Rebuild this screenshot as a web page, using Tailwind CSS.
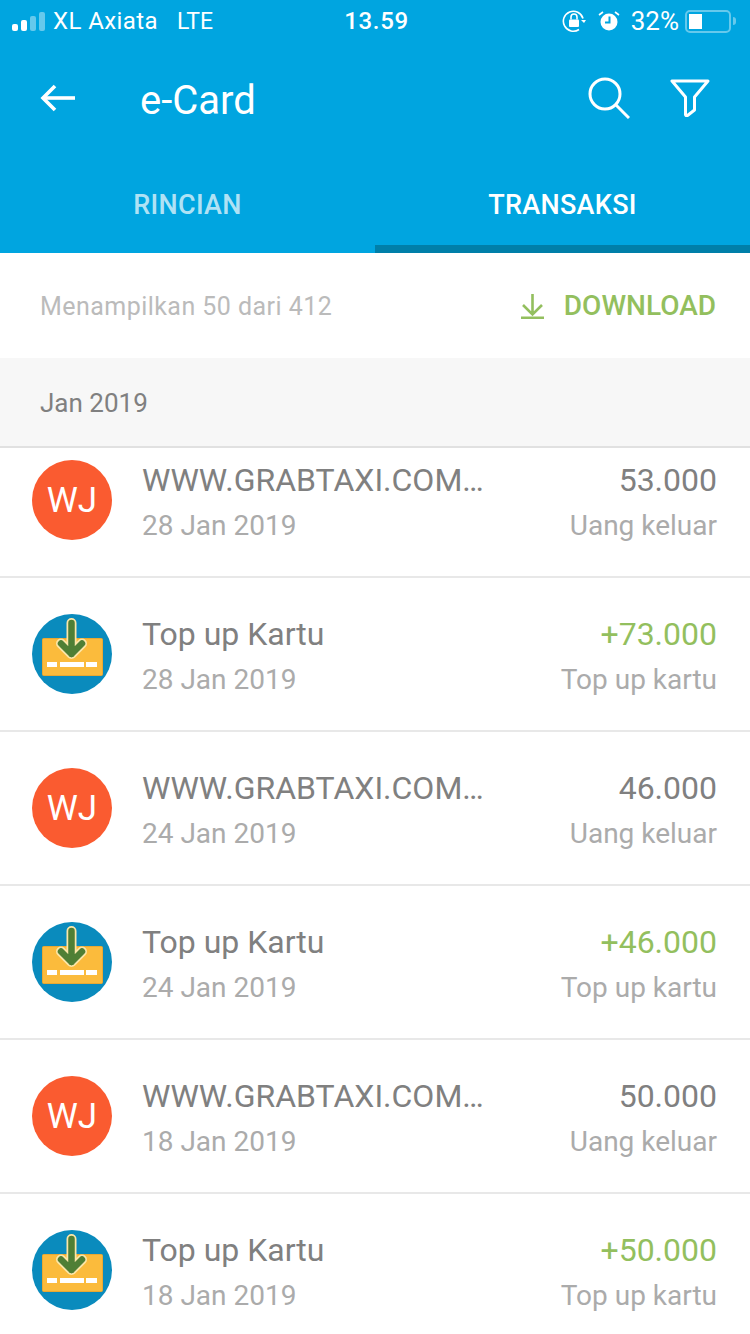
<!DOCTYPE html>
<html lang="id">
<head>
    <meta charset="UTF-8">
    <meta name="viewport" content="width=device-width, initial-scale=1.0">
    <title>e-Card</title>
    <script src="https://cdn.jsdelivr.net/npm/@tailwindcss/browser@4"></script>
</head>
<body class="font-['Roboto',sans-serif] bg-white antialiased">
<div class="w-[750px] h-[1334px] overflow-hidden flex flex-col">
    <!-- header -->
    <header class="bg-[#00a5e0] text-white h-[253px] shrink-0 flex flex-col">
        <div class="h-[42px] grid grid-cols-[1fr_auto_1fr] items-center pl-3 pr-[14px] text-[24px] leading-none">
            <div class="flex items-center">
                <div class="flex items-end gap-[3px]">
                    <span class="w-[6px] h-[7px] rounded-[2px] bg-white"></span>
                    <span class="w-[6px] h-[11px] rounded-[2px] bg-white"></span>
                    <span class="w-[6px] h-[15px] rounded-[2px] bg-white/40"></span>
                    <span class="w-[6px] h-[19px] rounded-[2px] bg-white/40"></span>
                </div>
                <span class="ml-2 whitespace-nowrap tracking-[0.4px]">XL Axiata</span>
                <span class="ml-[19px] text-[23px]">LTE</span>
            </div>
            <span class="font-medium tracking-[0.7px] ml-[5px]">13.59</span>
            <div class="flex items-center justify-end">
                <svg width="24" height="24" viewBox="0 0 24 24" fill="none" stroke="white" stroke-width="1.6">
                    <path d="M21 9.500A10 10 0 1 0 17 20.500"/>
                    <path d="M19 11l3 3 2-3z" fill="white" stroke="none"/>
                    <rect x="7" y="10.500" width="10" height="7.500" rx="1" fill="white" stroke="none"/>
                    <path d="M9 10.500V8a3 3 0 0 1 6 0v2.500"/>
                </svg>
                <svg class="ml-[12px]" width="22" height="22" viewBox="0 0 22 22" fill="white">
                    <circle cx="11" cy="12" r="8.500"/>
                    <path d="M1 5l4-3M21 5l-4-3" stroke="white" stroke-width="1.6"/>
                    <path d="M11.500 6.500v6H7" fill="none" stroke="#00a5e0" stroke-width="2"/>
                </svg>
                <span class="ml-[11px] text-[26px] whitespace-nowrap">32%</span>
                <div class="ml-[6px] w-[46px] h-[23px] rounded-[5px] border-2 border-white/40 p-[2px]">
                    <div class="w-[13px] h-[15px] bg-white"></div>
                </div>
                <div class="w-[3px] h-[8px] bg-white/40 rounded-r-full ml-[2px]"></div>
            </div>
        </div>
        <div class="h-[116px] flex items-center pl-10 pr-10">
            <svg class="mt-[-4px]" width="36" height="30" viewBox="0 0 36 30" fill="none" stroke="white" stroke-width="3.600">
                <path d="M35 15H3"/>
                <path d="M15 3L3 15l12 12"/>
            </svg>
            <h1 class="ml-[64px] mt-[1px] text-[40px] leading-none">e-Card</h1>
            <svg class="ml-auto mt-[-4px]" width="42" height="42" viewBox="0 0 42 42" fill="none" stroke="white" stroke-width="3">
                <circle cx="17" cy="17" r="15"/>
                <path d="M28 28l13 13"/>
            </svg>
            <svg class="ml-[40px] mt-[-4px]" width="40" height="38" viewBox="0 0 40 38" fill="none" stroke="white" stroke-width="3" stroke-linejoin="round">
                <path d="M2 2h36L24.500 18v13l-7 5.500c-1 .5-2 0-2-1V18z"/>
            </svg>
        </div>
        <div class="flex-1 flex text-[27px] tracking-[0.3px] font-medium leading-none">
            <div class="flex-1 flex items-center justify-center text-white/70 pt-[7px] border-b-[8px] border-transparent">RINCIAN</div>
            <div class="flex-1 flex items-center justify-center pt-[7px] border-b-[8px] border-[#007fa9]">TRANSAKSI</div>
        </div>
    </header>

    <!-- summary -->
    <div class="h-[105px] shrink-0 flex items-center justify-between pl-10 pr-[34px]">
        <span class="mt-[3px] text-[25px] text-[#bbbbbb] tracking-[0.45px]">Menampilkan 50 dari 412</span>
        <div class="flex items-center text-[#93bf5e] font-medium text-[28px]">
            <svg class="mt-[2px]" width="23" height="25" viewBox="0 0 23 25" fill="none" stroke="#93bf5e" stroke-width="2.600">
                <path d="M11.500 0v20M2 11l9.500 9.500L21 11M0 23.700h23"/>
            </svg>
            <span class="ml-[20px]">DOWNLOAD</span>
        </div>
    </div>

    <!-- month -->
    <div class="h-[90px] shrink-0 bg-[#f7f7f7] border-b-2 border-[#e1e1e1] flex items-center pl-10 pt-[3px] text-[26px] text-[#808080]">Jan 2019</div>

    <!-- list -->
    <ul class="flex-1 overflow-hidden">
        <li class="h-[130px] border-b-2 border-[#e8e8e8] flex items-start pl-8 pr-[33px] pt-3">
            <div class="w-20 h-20 rounded-full bg-[#fa5b30] text-white text-[35px] pt-[3px] flex items-center justify-center shrink-0">WJ</div>
            <div class="ml-[30px] flex-1 min-w-0">
                <p class="text-[32px] leading-10 text-[#808080] whitespace-nowrap">WWW.GRABTAXI.COM…</p>
                <p class="text-[28px] leading-9 mt-2 text-[#ababab]">28 Jan 2019</p>
            </div>
            <div class="text-right">
                <p class="text-[32px] leading-10 text-[#808080]">53.000</p>
                <p class="text-[28px] leading-9 mt-2 text-[#ababab]">Uang keluar</p>
            </div>
        </li>
        <li class="h-[154px] border-b-2 border-[#e8e8e8] flex items-center pl-8 pr-[33px]">
            <svg class="shrink-0" width="80" height="80" viewBox="0 0 80 80">
                <circle cx="40" cy="40" r="40" fill="#0a8bbd"/>
                <rect x="10.500" y="24.500" width="60" height="37" rx="1" fill="#fbbb3c" stroke="#e9a832"/>
                <rect x="15" y="48" width="10" height="5" fill="#fff"/>
                <rect x="28" y="48" width="24" height="5" fill="#fff"/>
                <rect x="54" y="48" width="11" height="5" fill="#fff"/>
                <path d="M39.500 9v31M29 29.500L39.500 40 50 29.500" fill="none" stroke="#fbe6a8" stroke-width="10" stroke-linecap="round" stroke-linejoin="round"/>
                <path d="M39.500 9v31M29 29.500L39.500 40 50 29.500" fill="none" stroke="#4f7f35" stroke-width="6.500" stroke-linecap="round" stroke-linejoin="round"/>
            </svg>
            <div class="ml-[30px] flex-1 min-w-0 pt-[4px]">
                <p class="text-[32px] leading-10 text-[#808080]">Top up Kartu</p>
                <p class="text-[28px] leading-9 mt-2 text-[#ababab]">28 Jan 2019</p>
            </div>
            <div class="text-right pt-[4px]">
                <p class="text-[32px] leading-10 text-[#93bf5e]">+73.000</p>
                <p class="text-[28px] leading-9 mt-2 text-[#ababab]">Top up kartu</p>
            </div>
        </li>
        <li class="h-[154px] border-b-2 border-[#e8e8e8] flex items-center pl-8 pr-[33px]">
            <div class="w-20 h-20 rounded-full bg-[#fa5b30] text-white text-[35px] pt-[3px] flex items-center justify-center shrink-0">WJ</div>
            <div class="ml-[30px] flex-1 min-w-0 pt-[4px]">
                <p class="text-[32px] leading-10 text-[#808080] whitespace-nowrap">WWW.GRABTAXI.COM…</p>
                <p class="text-[28px] leading-9 mt-2 text-[#ababab]">24 Jan 2019</p>
            </div>
            <div class="text-right pt-[4px]">
                <p class="text-[32px] leading-10 text-[#808080]">46.000</p>
                <p class="text-[28px] leading-9 mt-2 text-[#ababab]">Uang keluar</p>
            </div>
        </li>
        <li class="h-[154px] border-b-2 border-[#e8e8e8] flex items-center pl-8 pr-[33px]">
            <svg class="shrink-0" width="80" height="80" viewBox="0 0 80 80">
                <circle cx="40" cy="40" r="40" fill="#0a8bbd"/>
                <rect x="10.500" y="24.500" width="60" height="37" rx="1" fill="#fbbb3c" stroke="#e9a832"/>
                <rect x="15" y="48" width="10" height="5" fill="#fff"/>
                <rect x="28" y="48" width="24" height="5" fill="#fff"/>
                <rect x="54" y="48" width="11" height="5" fill="#fff"/>
                <path d="M39.500 9v31M29 29.500L39.500 40 50 29.500" fill="none" stroke="#fbe6a8" stroke-width="10" stroke-linecap="round" stroke-linejoin="round"/>
                <path d="M39.500 9v31M29 29.500L39.500 40 50 29.500" fill="none" stroke="#4f7f35" stroke-width="6.500" stroke-linecap="round" stroke-linejoin="round"/>
            </svg>
            <div class="ml-[30px] flex-1 min-w-0 pt-[4px]">
                <p class="text-[32px] leading-10 text-[#808080]">Top up Kartu</p>
                <p class="text-[28px] leading-9 mt-2 text-[#ababab]">24 Jan 2019</p>
            </div>
            <div class="text-right pt-[4px]">
                <p class="text-[32px] leading-10 text-[#93bf5e]">+46.000</p>
                <p class="text-[28px] leading-9 mt-2 text-[#ababab]">Top up kartu</p>
            </div>
        </li>
        <li class="h-[154px] border-b-2 border-[#e8e8e8] flex items-center pl-8 pr-[33px]">
            <div class="w-20 h-20 rounded-full bg-[#fa5b30] text-white text-[35px] pt-[3px] flex items-center justify-center shrink-0">WJ</div>
            <div class="ml-[30px] flex-1 min-w-0 pt-[4px]">
                <p class="text-[32px] leading-10 text-[#808080] whitespace-nowrap">WWW.GRABTAXI.COM…</p>
                <p class="text-[28px] leading-9 mt-2 text-[#ababab]">18 Jan 2019</p>
            </div>
            <div class="text-right pt-[4px]">
                <p class="text-[32px] leading-10 text-[#808080]">50.000</p>
                <p class="text-[28px] leading-9 mt-2 text-[#ababab]">Uang keluar</p>
            </div>
        </li>
        <li class="h-[154px] border-b-2 border-[#e8e8e8] flex items-center pl-8 pr-[33px]">
            <svg class="shrink-0" width="80" height="80" viewBox="0 0 80 80">
                <circle cx="40" cy="40" r="40" fill="#0a8bbd"/>
                <rect x="10.500" y="24.500" width="60" height="37" rx="1" fill="#fbbb3c" stroke="#e9a832"/>
                <rect x="15" y="48" width="10" height="5" fill="#fff"/>
                <rect x="28" y="48" width="24" height="5" fill="#fff"/>
                <rect x="54" y="48" width="11" height="5" fill="#fff"/>
                <path d="M39.500 9v31M29 29.500L39.500 40 50 29.500" fill="none" stroke="#fbe6a8" stroke-width="10" stroke-linecap="round" stroke-linejoin="round"/>
                <path d="M39.500 9v31M29 29.500L39.500 40 50 29.500" fill="none" stroke="#4f7f35" stroke-width="6.500" stroke-linecap="round" stroke-linejoin="round"/>
            </svg>
            <div class="ml-[30px] flex-1 min-w-0 pt-[4px]">
                <p class="text-[32px] leading-10 text-[#808080]">Top up Kartu</p>
                <p class="text-[28px] leading-9 mt-2 text-[#ababab]">18 Jan 2019</p>
            </div>
            <div class="text-right pt-[4px]">
                <p class="text-[32px] leading-10 text-[#93bf5e]">+50.000</p>
                <p class="text-[28px] leading-9 mt-2 text-[#ababab]">Top up kartu</p>
            </div>
        </li>
    </ul>
</div>
</body>
</html>
